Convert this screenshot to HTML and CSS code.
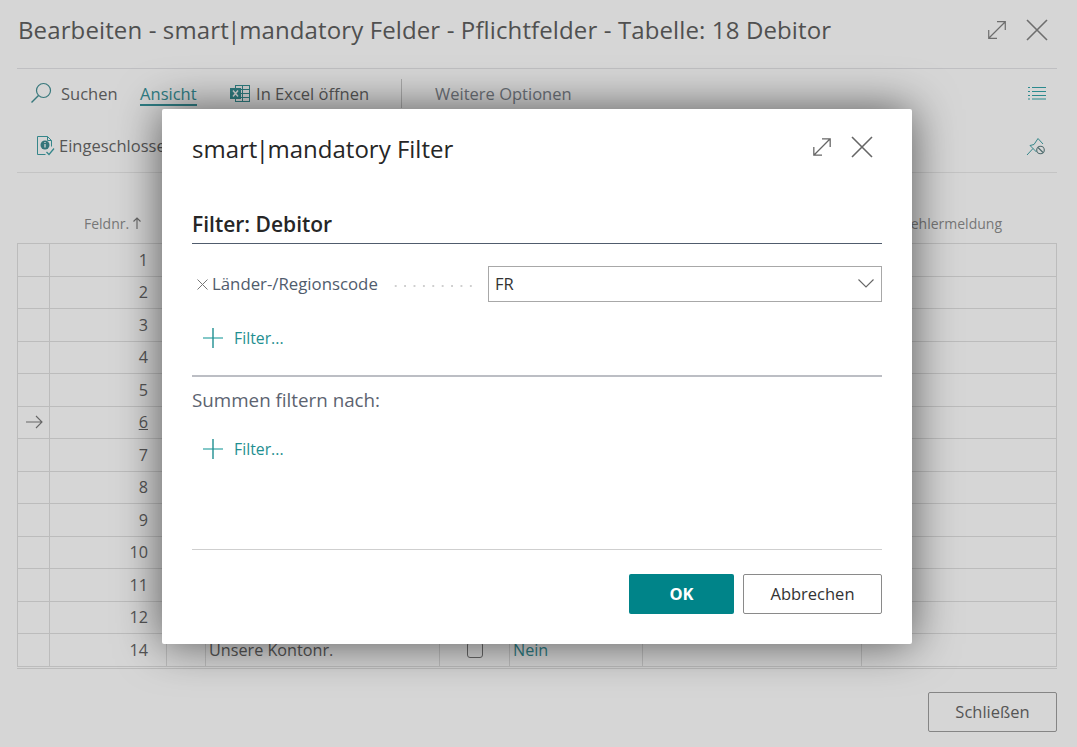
FILE: index.html
```html
<!DOCTYPE html>
<html lang="de">

<head>
  <meta charset="UTF-8">
  <meta name="viewport" content="width=device-width, initial-scale=1.0">
  <title>smart|mandatory Filter</title>
  <link rel="stylesheet" href="styles.css">
</head>

<body>
  <div class="page">
    <header class="page-header">
      <h1>Bearbeiten - smart<span class="pipe">|</span>mandatory Felder - Pflichtfelder - Tabelle: 18 Debitor</h1>
      <div class="window-icons">
        <svg class="icon-expand" width="22" height="22" viewBox="0 0 22 22"><path d="M2 20 20 2M11 2h9v9M2 11v9h9" fill="none" stroke="currentColor" stroke-width="1.3" transform="translate(11 11) scale(.92) translate(-11 -11)"/></svg>
        <svg class="icon-close" width="22" height="22" viewBox="0 0 22 22"><path d="M1 1 21 21M21 1 1 21" fill="none" stroke="currentColor" stroke-width="1.6"/></svg>
      </div>
    </header>

    <div class="toolbar toolbar-main">
      <button class="tool">
        <svg width="22" height="22" viewBox="0 0 22 22"><circle cx="13.5" cy="8.5" r="7" fill="none" stroke="#38787c" stroke-width="1.2"/><path d="M8.500 13.500 1.500 20.500" stroke="#38787c" stroke-width="1.4"/></svg>
        <span>Suchen</span>
      </button>
      <button class="tool tool-active"><span>Ansicht</span></button>
      <button class="tool tool-excel">
        <svg width="21" height="19" viewBox="0 0 21 19"><rect x="5.500" y="1.500" width="14" height="16" fill="none" stroke="#2f7d80"/><path d="M5.500 5.500h14M5.500 9.500h14M5.500 13.500h14M12.500 1.500v16" stroke="#2f7d80"/><rect x="0" y="4" width="11" height="11" fill="#2f7d80"/><path d="M3 6.500 8 12.500M8 6.500 3 12.500" stroke="#d6d6d6" stroke-width="1.500"/></svg>
        <span>In Excel öffnen</span>
      </button>
      <span class="tool-divider"></span>
      <button class="tool tool-more"><span>Weitere Optionen</span></button>
      <svg class="tool-end" width="18" height="14" viewBox="0 0 18 14"><path d="M0 1.500h2M4 1.500h14M0 5.500h2M4 5.500h14M0 9.500h2M4 9.500h14M0 13h2M4 13h14" stroke="#2b8a8e" stroke-width="1.100"/></svg>
    </div>

    <div class="toolbar toolbar-sub">
      <button class="tool tool-included">
        <svg width="18" height="20" viewBox="0 0 18 20"><path d="M.500 .500h10l4 4v6M.500 .500v18h8" fill="none" stroke="#35868a"/><path d="M10.500 .500v4h4" fill="none" stroke="#35868a"/><circle cx="8" cy="9" r="4.500" fill="#35757a"/><path d="M8 8v3.500M8 6v1" stroke="#d6d6d6" stroke-width="1.300"/><path d="M9.500 16 12 18.500 17 12.500" fill="none" stroke="#35868a" stroke-width="1.300"/></svg>
        <span>Eingeschlosse</span>
      </button>
      <svg class="tool-end" width="20" height="20" viewBox="0 0 20 20"><path d="M1 19 7 12.500M4 9.500l4-1 4-6 5 5.500M4 9.500l6.500 6.500" fill="none" stroke="#35868a"/><circle cx="14.500" cy="14" r="3.800" fill="none" stroke="#4d6a6c" stroke-width="1.100"/><path d="M12 11.500l5 5" stroke="#4d6a6c" stroke-width="1.100"/></svg>
    </div>

    <div class="grid-head">
      <span class="head-nr">Feldnr.
        <svg width="8" height="12" viewBox="0 0 8 12"><path d="M4 12V1M.500 4.500 4 1l3.500 3.500" fill="none" stroke="#666" stroke-width="1.100"/></svg>
      </span>
      <span class="head-msg">ehlermeldung</span>
    </div>

    <div class="grid-wrap">
      <table class="grid">
        <colgroup>
          <col class="c-mark">
          <col class="c-nr">
          <col class="c-gap">
          <col class="c-name">
          <col class="c-check">
          <col class="c-val">
          <col class="c-extra">
          <col>
        </colgroup>
        <tbody>
          <tr><td></td><td class="nr">1</td><td></td><td></td><td></td><td></td><td></td><td></td></tr>
          <tr><td></td><td class="nr">2</td><td></td><td></td><td></td><td></td><td></td><td></td></tr>
          <tr><td></td><td class="nr">3</td><td></td><td></td><td></td><td></td><td></td><td></td></tr>
          <tr><td></td><td class="nr">4</td><td></td><td></td><td></td><td></td><td></td><td></td></tr>
          <tr><td></td><td class="nr">5</td><td></td><td></td><td></td><td></td><td></td><td></td></tr>
          <tr>
            <td class="mark"><svg width="18" height="14" viewBox="0 0 18 14"><path d="M1 7h16M11 1l6 6-6 6" fill="none" stroke="#666" stroke-width="1.100"/></svg></td>
            <td class="nr"><u>6</u></td><td></td><td></td><td></td><td></td><td></td><td></td>
          </tr>
          <tr><td></td><td class="nr">7</td><td></td><td></td><td></td><td></td><td></td><td></td></tr>
          <tr><td></td><td class="nr">8</td><td></td><td></td><td></td><td></td><td></td><td></td></tr>
          <tr><td></td><td class="nr">9</td><td></td><td></td><td></td><td></td><td></td><td></td></tr>
          <tr><td></td><td class="nr">10</td><td></td><td></td><td></td><td></td><td></td><td></td></tr>
          <tr><td></td><td class="nr">11</td><td></td><td></td><td></td><td></td><td></td><td></td></tr>
          <tr><td></td><td class="nr">12</td><td></td><td></td><td></td><td></td><td></td><td></td></tr>
          <tr>
            <td></td><td class="nr">14</td><td></td><td>Unsere Kontonr.</td>
            <td class="check"><span class="checkbox"></span></td>
            <td class="val">Nein</td><td></td><td></td>
          </tr>
        </tbody>
      </table>
    </div>

    <footer class="page-footer">
      <button class="btn btn-close">Schließen</button>
    </footer>
  </div>

  <div class="modal">
    <div class="modal-header">
      <h2>smart<span class="pipe">|</span>mandatory Filter</h2>
      <div class="window-icons window-icons-dark">
        <svg class="icon-expand" width="20" height="20" viewBox="0 0 22 22"><path d="M2 20 20 2M11 2h9v9M2 11v9h9" fill="none" stroke="currentColor" stroke-width="1.400"/></svg>
        <svg class="icon-close" width="22" height="22" viewBox="0 0 22 22"><path d="M1 1 21 21M21 1 1 21" fill="none" stroke="currentColor" stroke-width="1.600"/></svg>
      </div>
    </div>

    <h3 class="filter-title">Filter: Debitor</h3>

    <div class="filter-row">
      <svg class="filter-remove" width="11" height="11" viewBox="0 0 11 11"><path d="M.500 .500l10 10M10.500 .500l-10 10" stroke="#777" fill="none"/></svg>
      <span class="filter-label">Länder-/Regionscode</span>
      <span class="filter-dots"></span>
      <div class="select">
        <span>FR</span>
        <svg width="16" height="9" viewBox="0 0 16 9"><path d="M.500 .500 8 8 15.500 .500" fill="none" stroke="#666" stroke-width="1.100"/></svg>
      </div>
    </div>

    <a class="add-filter add-filter-first">
      <svg width="20" height="20" viewBox="0 0 20 20"><path d="M0 10h20" stroke="#4eb0b0" stroke-width="1.400"/><path d="M10 0v20" stroke="#1f8f91" stroke-width="1.400"/></svg>
      <span>Filter...</span>
    </a>

    <div class="section-rule"></div>
    <p class="totals-label">Summen filtern nach:</p>

    <a class="add-filter">
      <svg width="20" height="20" viewBox="0 0 20 20"><path d="M0 10h20" stroke="#4eb0b0" stroke-width="1.400"/><path d="M10 0v20" stroke="#1f8f91" stroke-width="1.400"/></svg>
      <span>Filter...</span>
    </a>

    <div class="modal-footer">
      <button class="btn btn-ok">OK</button>
      <button class="btn btn-cancel">Abbrechen</button>
    </div>
  </div>
</body>

</html>
```

FILE: styles.css
```css
* {
  box-sizing: border-box;
}

body {
  margin: 0;
  font-family: "Open Sans", "Noto Sans", Arial, sans-serif;
  background-color: #d6d6d6;
  color: #505050;
  overflow: hidden;
}

button {
  font-family: inherit;
  background: none;
  border: none;
  padding: 0;
  color: inherit;
}

.page {
  height: 747px;
  padding: 0 20px 0 17px;
  display: flex;
  flex-direction: column;
}

.page-header {
  height: 69px;
  padding-left: 1px;
  border-bottom: 1px solid #bfbfc2;
  display: flex;
  justify-content: space-between;
  align-items: center;
  padding-bottom: 9px;
}

h1 {
  margin: 0;
  font-size: 24px;
  font-weight: 500;
  letter-spacing: 0.12px;
  color: #505050;
}

/* the pipe is wider in this font than in the original */
.pipe {
  margin: 0 -1.500px;
}

.window-icons {
  display: flex;
  align-items: center;
  gap: 18px;
  margin-right: 9px;
  color: #6e6e6e;
}

.window-icons-dark {
  gap: 19px;
  margin-right: 9px;
  margin-bottom: 2px;
  color: #666;
}

.toolbar {
  display: flex;
  align-items: center;
}

.toolbar-main {
  height: 48px;
  padding-left: 13px;
}

.toolbar-sub {
  height: 56px;
  padding-left: 20px;
  padding-top: 2px;
  border-bottom: 1px solid #c4c4c4;
  justify-content: space-between;
}

.tool {
  height: 36px;
  display: flex;
  align-items: center;
  gap: 9px;
  font-size: 16.500px;
  color: #565656;
  white-space: nowrap;
}

.tool-active {
  margin-left: 22.500px;
  height: 24px;
  margin-top: 2px;
  color: #2f7d84;
  border-bottom: 2px solid #2f7d84;
}

.tool-excel {
  margin-left: 33.500px;
  gap: 5px;
}

.tool-divider {
  width: 1px;
  height: 29px;
  margin: 0 33px 0 32px;
  background-color: #a9a9a9;
}

.tool-more {
  color: #6c7178;
}

.tool-included {
  gap: 4px;
}

.tool-end {
  margin-left: auto;
  margin-right: 11px;
}

.grid-head {
  height: 70px;
  padding-top: 41px;
  font-size: 14px;
  color: #777;
  display: flex;
  justify-content: space-between;
}

.head-nr {
  margin-left: 67px;
}

.head-msg {
  margin-right: 55px;
}

.grid-wrap {
  border-bottom: 1px solid #bcbcbc;
  padding-bottom: 1px;
}

.grid {
  width: 100%;
  table-layout: fixed;
  border-collapse: collapse;
  font-size: 16.200px;
  color: #555;
}

.grid td {
  height: 32.500px;
  padding: 0 3px;
  border: 1px solid #bcbcbc;
  white-space: nowrap;
  overflow: hidden;
}

.c-mark {
  width: 32px;
}

.c-nr {
  width: 117px;
}

.c-gap {
  width: 39px;
}

.c-name {
  width: 234px;
}

.c-check {
  width: 70px;
}

.c-val {
  width: 133px;
}

.c-extra {
  width: 219px;
}

.grid .nr {
  text-align: right;
  padding-right: 18px;
}

.grid .mark {
  text-align: center;
  line-height: 0;
}

.grid .check {
  text-align: center;
  line-height: 0;
}

.grid .val {
  color: #2f7d84;
}

.checkbox {
  display: inline-block;
  width: 16px;
  height: 16px;
  border: 1px solid #666;
  border-radius: 3px;
}

.page-footer {
  display: flex;
  justify-content: flex-end;
  margin-top: 23px;
}

.btn {
  height: 40px;
  font-size: 16.500px;
  border-radius: 2px;
}

.btn-close {
  width: 129px;
  border: 1px solid #858585;
  color: #555;
}

/* dialog on top of the page */
.modal {
  position: absolute;
  left: 162px;
  top: 109px;
  width: 750px;
  height: 535px;
  padding: 0 30px;
  background-color: #fff;
  border-radius: 2px;
  box-shadow: 0 0 45px rgba(0, 0, 0, 0.6);
  color: #262626;
  display: flex;
  flex-direction: column;
}

.modal-header {
  height: 80px;
  padding-bottom: 2px;
  display: flex;
  justify-content: space-between;
  align-items: center;
}

h2 {
  margin: 0;
  font-size: 24px;
  font-weight: 500;
}

.filter-title {
  margin: 16px 0 0;
  height: 39px;
  padding-top: 5px;
  font-size: 21px;
  font-weight: 600;
  border-bottom: 1px solid #505c6d;
}

.filter-row {
  margin-top: 22px;
  height: 36px;
  display: flex;
  align-items: center;
  padding-left: 5px;
}

.filter-remove {
  flex-shrink: 0;
}

.filter-label {
  margin-left: 4px;
  width: 175px;
  padding-bottom: 2px;
  font-size: 16.800px;
  color: #505c6d;
  white-space: nowrap;
}

.filter-dots {
  width: 85px;
  height: 2px;
  margin-left: 4px;
  margin-top: 3px;
  background-image: radial-gradient(circle, #cfcfcf 1px, transparent 1px);
  background-size: 9.400px 2px;
}

.select {
  width: 394px;
  height: 36px;
  margin-left: 12px;
  padding: 0 7px 2px 6px;
  border: 1px solid #a8a8a8;
  display: flex;
  align-items: center;
  justify-content: space-between;
  font-size: 16.500px;
  color: #333;
}

.add-filter {
  display: flex;
  align-items: center;
  gap: 11px;
  padding-left: 11px;
  height: 20px;
  font-size: 15.800px;
  color: #1f8f91;
}

.add-filter-first {
  margin-top: 26px;
}

.section-rule {
  margin-top: 27px;
  height: 2px;
  background-color: #bcbec4;
}

.totals-label {
  margin: 11px 0 0;
  height: 51px;
  font-size: 18.800px;
  line-height: 24px;
  color: #5c6370;
}

.modal-footer {
  margin-top: 90px;
  padding-top: 24px;
  border-top: 1px solid #cfcfcf;
  display: flex;
  justify-content: flex-end;
  gap: 9px;
}

.btn-ok {
  width: 105px;
  padding-bottom: 2px;
  background-color: #008489;
  color: #fff;
  font-weight: 700;
}

.btn-cancel {
  width: 139px;
  padding-bottom: 2px;
  border: 1px solid #8a8a8a;
  color: #333;
}
```
